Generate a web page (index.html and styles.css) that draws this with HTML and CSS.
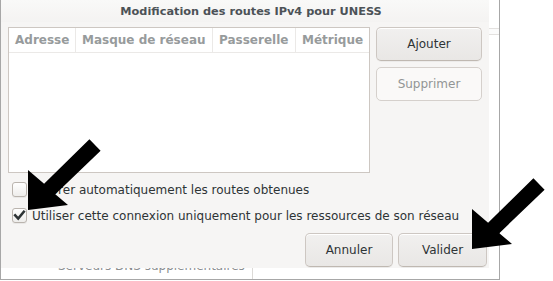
FILE: index.html
```html
<!DOCTYPE html>
<html lang="fr">
<head>
<meta charset="utf-8">
<title>Modification des routes IPv4 pour UNESS</title>
<link rel="stylesheet" href="styles.css">
</head>
<body>
<div class="scene">
  <div class="parent-window">
    <div class="tabbar"></div>
    <div class="spacer"></div>
    <div class="dns-row">
      <div class="dns-label">Serveurs DNS supplémentaires</div>
      <div class="dns-field"></div>
    </div>
  </div>

  <div class="dialog">
    <div class="titlebar"><span class="title">Modification des routes IPv4 pour UNESS</span></div>
    <div class="body">
      <div class="main-row">
        <div class="routes">
          <div class="thead">
            <div class="th c1">Adresse</div>
            <div class="th c2">Masque de réseau</div>
            <div class="th c3">Passerelle</div>
            <div class="th c4">Métrique</div>
          </div>
        </div>
        <div class="side-buttons">
          <button class="btn">Ajouter</button>
          <button class="btn disabled">Supprimer</button>
        </div>
      </div>
      <label class="check-row first">
        <span class="box"></span>
        <span class="check-text">Ignorer automatiquement les routes obtenues</span>
      </label>
      <label class="check-row">
        <span class="box checked"><svg viewBox="0 0 15 15" width="15" height="15"><path d="M3.2 7.4 L6.2 10.6 L11.8 3.8" fill="none" stroke="#2e3436" stroke-width="2.6" stroke-linecap="square" stroke-linejoin="miter"/></svg></span>
        <span class="check-text">Utiliser cette connexion uniquement pour les ressources de son réseau</span>
      </label>
      <div class="actions">
        <button class="btn action annuler">Annuler</button>
        <button class="btn action valider">Valider</button>
      </div>
    </div>
  </div>

  <svg class="arrows" width="553" height="281" viewBox="0 0 553 281">
    <polygon points="28,210 28,170 44.1,183.8 89.4,139.3 100.6,150.7 55.3,194.2 68,205" fill="#000"/>
    <polygon points="28,210 28,170 44.1,183.8 89.4,139.3 100.6,150.7 55.3,194.2 68,205" fill="#000" transform="translate(444 39)"/>
  </svg>
</div>
</body>
</html>
```

FILE: styles.css
```css
* { box-sizing: border-box; }

html, body {
  margin: 0;
  padding: 0;
  background: #ffffff;
}

body {
  font-family: "DejaVu Sans", "Noto Sans", sans-serif;
  font-size: 12px;
  color: #2e3436;
}

.scene {
  position: relative;
  width: 553px;
  height: 281px;
  overflow: hidden;
  background: #ffffff;
}

/* window behind the dialog */
.parent-window {
  position: absolute;
  left: 0;
  top: -40px;
  width: 500px;
  height: 320px;
  background: #ffffff;
  border: 1px solid #a7a7a7;
  border-top: none;
  display: flex;
  flex-direction: column;
}

.tabbar {
  margin-top: 68px;
  height: 7px;
  border-top: 1px solid #e3e1df;
  border-bottom: 1px solid #e3e1df;
  background: #fbfbfb;
}

.spacer { flex: 1; }

.dns-row {
  display: flex;
  height: 20px;
}

.dns-label {
  width: 252px;
  padding-left: 57px;
  border-right: 1px solid #dcdad7;
  color: #8a8d8f;
  font-size: 12px;
  line-height: 14px;
}

.dns-field { flex: 1; }

/* dialog */
.dialog {
  position: absolute;
  left: 1px;
  top: 0;
  width: 488px;
  height: 268px;
  background: #f6f5f4;
  display: flex;
  flex-direction: column;
}

.titlebar {
  height: 22px;
  display: flex;
  align-items: center;
  justify-content: center;
  padding-left: 12px;
  background: linear-gradient(#f9f9f8, #f4f3f2);
}

.title {
  font-weight: bold;
  font-size: 11.3px;
  color: #4c5257;
  line-height: 13px;
}

.body {
  padding: 5px 2px 0 7px;
  display: flex;
  flex-direction: column;
}

.main-row {
  display: flex;
  gap: 6px;
  height: 146px;
}

.routes {
  width: 362px;
  height: 146px;
  background: #ffffff;
  border: 1px solid #cdc7c2;
}

.thead {
  display: flex;
  height: 25px;
  border-bottom: 1px solid #ebe9e7;
}

.th {
  height: 24px;
  padding-left: 6px;
  padding-top: 5px;
  font-weight: bold;
  font-size: 12px;
  line-height: 14px;
  color: #979b9c;
  border-right: 1px solid #ebe9e7;
  white-space: nowrap;
}

.c1 { width: 67px; }
.c2 { width: 137px; }
.c3 { width: 83px; }
.c4 { width: 73px; border-right: none; }

.side-buttons {
  width: 106px;
  display: flex;
  flex-direction: column;
  gap: 6px;
}

.btn {
  height: 34px;
  padding: 0;
  font-family: "DejaVu Sans", "Noto Sans", sans-serif;
  font-size: 12px;
  color: #2e3436;
  background: linear-gradient(#f1f0ef, #e9e7e5);
  border: 1px solid #cdc7c2;
  border-bottom-color: #bfb8b1;
  border-radius: 5px;
  box-shadow: inset 0 1px #ffffff, 0 1px rgba(0,0,0,0.04);
}

.btn.disabled {
  background: #faf9f8;
  border-color: #d5d0cc;
  color: #929595;
  box-shadow: none;
}

.check-row {
  display: flex;
  align-items: center;
  gap: 5px;
  height: 17px;
  margin-top: 9px;
  padding-left: 4px;
}

.check-row.first { margin-top: 8px; }

.box {
  width: 15px;
  height: 15px;
  flex: none;
  border: 1px solid #bab4ae;
  border-radius: 3px;
  background: linear-gradient(#ffffff, #eeedeb);
  box-shadow: 0 1px rgba(0,0,0,0.05);
  display: flex;
  align-items: center;
  justify-content: center;
}

.box svg {
  display: block;
  margin: -1px;
}

.check-text {
  font-size: 12px;
  line-height: 14px;
  color: #2e3436;
  white-space: nowrap;
}

.actions {
  display: flex;
  justify-content: flex-end;
  gap: 5px;
  margin-top: 9px;
}

.action.annuler { width: 88px; }
.action.valider { width: 89px; }

.arrows {
  position: absolute;
  left: 0;
  top: 0;
  pointer-events: none;
}
```
